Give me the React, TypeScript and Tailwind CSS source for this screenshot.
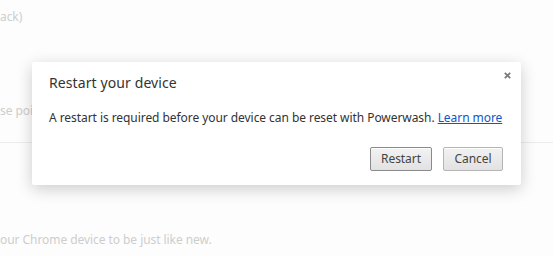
export default function App() {
  return (
    <div className="relative h-[256px] w-[553px] overflow-hidden bg-[#fdfdfd] font-['Noto_Sans',sans-serif] text-[12px] tracking-[-0.06px] text-[#cdcdcd]">
      <div className="flex flex-col">
        <p className="mt-[7px] h-[20px] leading-[20px]">ack)</p>
        <div className="mt-[74px] h-[42px] border-b border-[#ececec]">
          <p className="leading-[20px]">se poi</p>
        </div>
        <p className="mt-[87px] leading-[20px]">our Chrome device to be just like new.</p>
      </div>

      <div className="absolute left-[32px] top-[62px] flex h-[123px] w-[489px] flex-col rounded-[2px] bg-white pl-[17px] pr-[10px] shadow-[0_4px_16px_rgba(0,0,0,0.2)]">
        <button className="absolute right-[7px] top-[6px] flex h-[14px] w-[14px] items-center justify-center text-[#7a7a7a]">
          <svg width="7" height="7" viewBox="0 0 7 7">
            <path d="M0.8 0.8L6.2 6.2M6.2 0.8L0.8 6.2" stroke="currentColor" strokeWidth="1.8" />
          </svg>
        </button>
        <h2 className="mt-[10px] text-[14px] leading-[22px] tracking-[0.1px] text-[#333]">Restart your device</h2>
        <p className="mt-[15px] whitespace-nowrap text-[12px] leading-[18px] text-[#333]">
          A restart is required before your device can be reset with Powerwash.{' '}
          <a href="#" className="text-[#1155cc] underline">Learn more</a>
        </p>
        <div className="mt-[20px] flex justify-end gap-[11px] pr-[8px]">
          <button className="h-[24px] w-[62px] rounded-[2px] border border-[#8a8a8a] bg-gradient-to-b from-[#f2f2f2] to-[#e2e2e2] text-[12px] text-[#444] shadow-[inset_0_1px_0_#fff]">
            Restart
          </button>
          <button className="h-[24px] w-[60px] rounded-[2px] border border-[#b5b5b5] bg-gradient-to-b from-[#f2f2f2] to-[#e2e2e2] text-[12px] text-[#444] shadow-[inset_0_1px_0_#fff]">
            Cancel
          </button>
        </div>
      </div>
    </div>
  );
}
